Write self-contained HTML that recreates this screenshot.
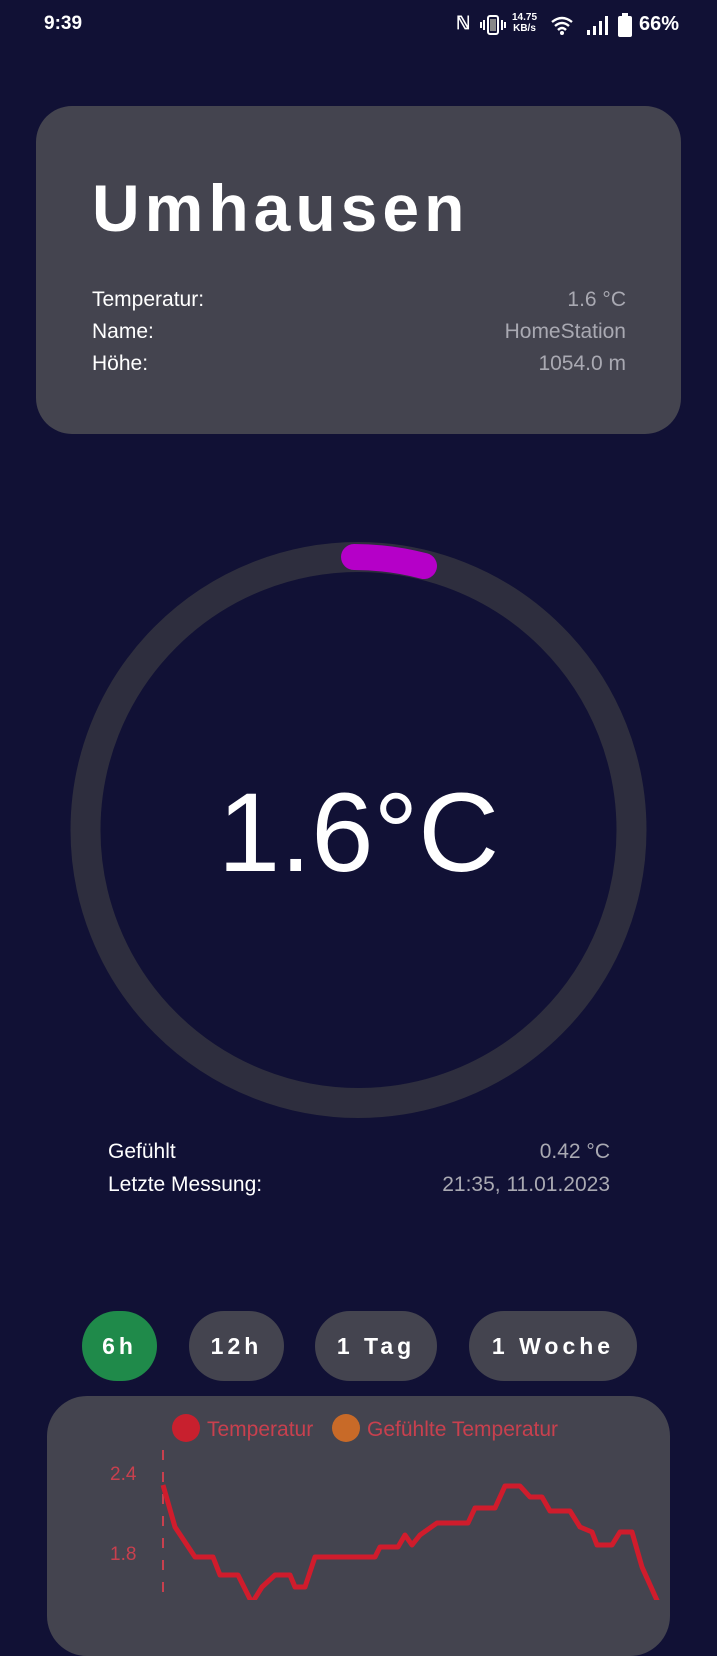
<!DOCTYPE html>
<html><head><meta charset="utf-8"><style>
*{margin:0;padding:0;box-sizing:border-box}
body{width:717px;height:1600px;background:#111135;font-family:"Liberation Sans",sans-serif;color:#fff;position:relative;overflow:hidden}
.abs{position:absolute}
.card{left:36px;top:106px;width:645px;height:328px;background:#44444f;border-radius:36px}
.row{position:absolute;font-size:21px;left:92px;width:534px;display:flex;justify-content:space-between}
.row span:last-child{color:#a9a9b2}
.btn{position:absolute;top:1311px;height:70px;border-radius:35px;background:#44444f;font-size:23px;font-weight:bold;letter-spacing:4px;display:flex;align-items:center;justify-content:center}
</style></head><body>
<div class="abs" style="left:44px;top:13px;font-size:19px;font-weight:bold">9:39</div>
<div class="abs" style="left:456px;top:13px;font-size:18px;font-weight:bold">ℕ</div>
<svg class="abs" style="left:480px;top:14px" width="26" height="22"><rect x="8" y="2" width="10" height="18" rx="2" fill="none" stroke="#fff" stroke-width="2"/><rect x="10" y="5" width="6" height="12" fill="#888"/><path d="M4 6v10M1 8v6M22 6v10M25 8v6" stroke="#fff" stroke-width="2"/></svg>
<div class="abs" style="left:512px;top:12px;font-size:10px;font-weight:bold;line-height:11px;text-align:center">14.75<br>KB/s</div>
<svg class="abs" style="left:551px;top:16px" width="22" height="20"><path d="M1 6Q11-2 21 6M4 10Q11 4 18 10M7 14Q11 10 15 14" stroke="#fff" stroke-width="2.4" fill="none"/><circle cx="11" cy="17" r="2" fill="#fff"/></svg>
<svg class="abs" style="left:586px;top:16px" width="22" height="20"><rect x="1" y="14" width="3" height="5" fill="#fff"/><rect x="7" y="10" width="3" height="9" fill="#fff"/><rect x="13" y="5" width="3" height="14" fill="#fff"/><rect x="19" y="0" width="3" height="19" fill="#fff"/></svg>
<svg class="abs" style="left:618px;top:13px" width="14" height="24"><rect x="4" y="0" width="6" height="3" fill="#fff"/><rect x="0" y="3" width="14" height="21" rx="2" fill="#fff"/></svg>
<div class="abs" style="left:639px;top:13px;font-size:20px;font-weight:bold">66%</div>

<div class="abs card"></div>
<div class="abs" style="left:92px;top:170px;font-size:66px;font-weight:bold;letter-spacing:5px">Umhausen</div>
<div class="row" style="top:288px"><span>Temperatur:</span><span>1.6 °C</span></div>
<div class="row" style="top:320px"><span>Name:</span><span>HomeStation</span></div>
<div class="row" style="top:352px"><span>Höhe:</span><span>1054.0 m</span></div>

<svg class="abs" style="left:0;top:0" width="717" height="1140">
<circle cx="358.5" cy="830" r="273" fill="none" stroke="#2e2e3e" stroke-width="30"/>
<path d="M354 557 A273 273 0 0 1 424 566" fill="none" stroke="#b500c8" stroke-width="26" stroke-linecap="round"/>
</svg>
<div class="abs" style="left:0;width:717px;top:768px;text-align:center;font-size:112px">1.6°C</div>

<div class="row" style="left:108px;width:502px;top:1140px"><span>Gefühlt</span><span>0.42 °C</span></div>
<div class="row" style="left:108px;width:502px;top:1173px"><span>Letzte Messung:</span><span>21:35, 11.01.2023</span></div>

<div class="btn" style="left:82px;width:75px;background:#1f8a4a">6h</div>
<div class="btn" style="left:189px;width:95px">12h</div>
<div class="btn" style="left:315px;width:122px">1 Tag</div>
<div class="btn" style="left:469px;width:168px">1 Woche</div>

<div class="abs" style="left:47px;top:1396px;width:623px;height:260px;background:#44444f;border-radius:40px"></div>
<svg class="abs" style="left:0;top:1390px" width="717" height="210">
<circle cx="186" cy="38" r="14" fill="#c8202e"/>
<text x="207" y="46" fill="#c8404e" font-size="21" font-family="Liberation Sans, sans-serif">Temperatur</text>
<circle cx="346" cy="38" r="14" fill="#c86a28"/>
<text x="367" y="46" fill="#c8404e" font-size="21" font-family="Liberation Sans, sans-serif">Gefühlte Temperatur</text>
<text x="110" y="90" fill="#c8404e" font-size="19" font-family="Liberation Sans, sans-serif">2.4</text>
<text x="110" y="170" fill="#c8404e" font-size="19" font-family="Liberation Sans, sans-serif">1.8</text>
<line x1="163" y1="60" x2="163" y2="210" stroke="#c8404e" stroke-width="2" stroke-dasharray="10 12"/>
<polyline fill="none" stroke="#d01c2c" stroke-width="5" stroke-linejoin="round" points="163,95 175,137 195,167 213,167 220,185 238,185 252,213 262,197 275,185 290,185 295,197 305,197 315,167 375,167 380,157 398,157 405,145 412,155 420,145 437,133 468,133 475,118 495,118 505,96 520,96 530,107 542,107 550,121 570,121 580,137 592,142 597,155 612,155 620,142 632,142 642,177 660,217"/>
</svg>
</body></html>
